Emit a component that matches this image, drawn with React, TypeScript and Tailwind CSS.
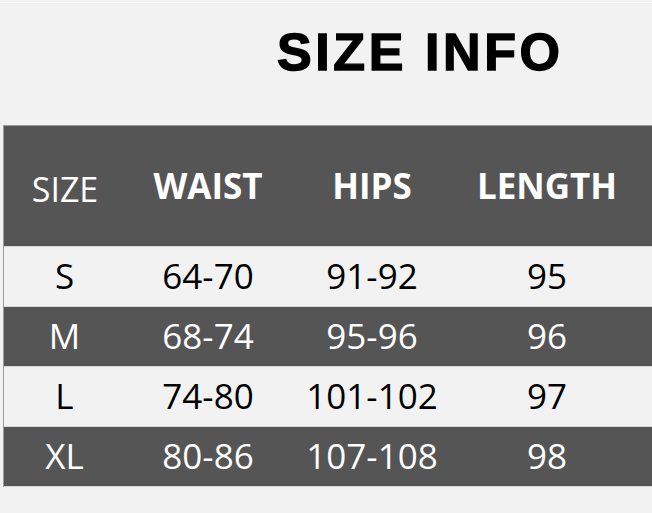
import React from 'react';

const rows = [
  { size: 'S', waist: '64-70', hips: '91-92', length: '95' },
  { size: 'M', waist: '68-74', hips: '95-96', length: '96' },
  { size: 'L', waist: '74-80', hips: '101-102', length: '97' },
  { size: 'XL', waist: '80-86', hips: '107-108', length: '98' },
];

const cols = 'grid grid-cols-[121px_166px_162px_188px_1fr] items-center';

const App = () => {
  return (
    <div className="h-[513px] w-[652px] overflow-hidden bg-[#f2f2f2] font-['Open_Sans',sans-serif]">
      <div className="h-[2px]" />
      <div className="h-[1px] bg-white" />
      {/* Title */}
      <div className="pt-[23px] pl-[277px]">
        <h1 className="h-[52px] text-[52px] leading-[52px] font-bold tracking-[3.6px] text-black font-['Liberation_Sans',Arial,sans-serif] [-webkit-text-stroke:1.4px_black]">
          SIZE INFO
        </h1>
      </div>

      {/* Table */}
      <div className="mt-[47px] ml-[3px] border-t border-l border-[#9a9a9a]">
        <div className={`${cols} h-[120px] bg-[#555555] text-white`}>
          <div className="text-center text-[34px] pt-[6px] pl-[1px]">SIZE</div>
          <div className="text-center text-[35px] font-bold">WAIST</div>
          <div className="text-center text-[35px] font-bold">HIPS</div>
          <div className="text-center text-[35px] font-bold">LENGTH</div>
          <div />
        </div>
        {rows.map((r, i) => {
          const dark = i % 2 === 1;
          return (
            <div
              key={r.size}
              className={`${cols} h-[60px] border-t border-[#d8d8d8] text-[35px] font-medium ${
                dark ? 'bg-[#555555] text-white' : 'bg-[#f2f2f2] text-black'
              }`}
            >
              <div className="text-center">{r.size}</div>
              <div className="text-center">{r.waist}</div>
              <div className="text-center">{r.hips}</div>
              <div className="text-center">{r.length}</div>
              <div />
            </div>
          );
        })}
        <div className="h-[1px] bg-[#d8d8d8]" />
      </div>
    </div>
  );
};

export default App;
